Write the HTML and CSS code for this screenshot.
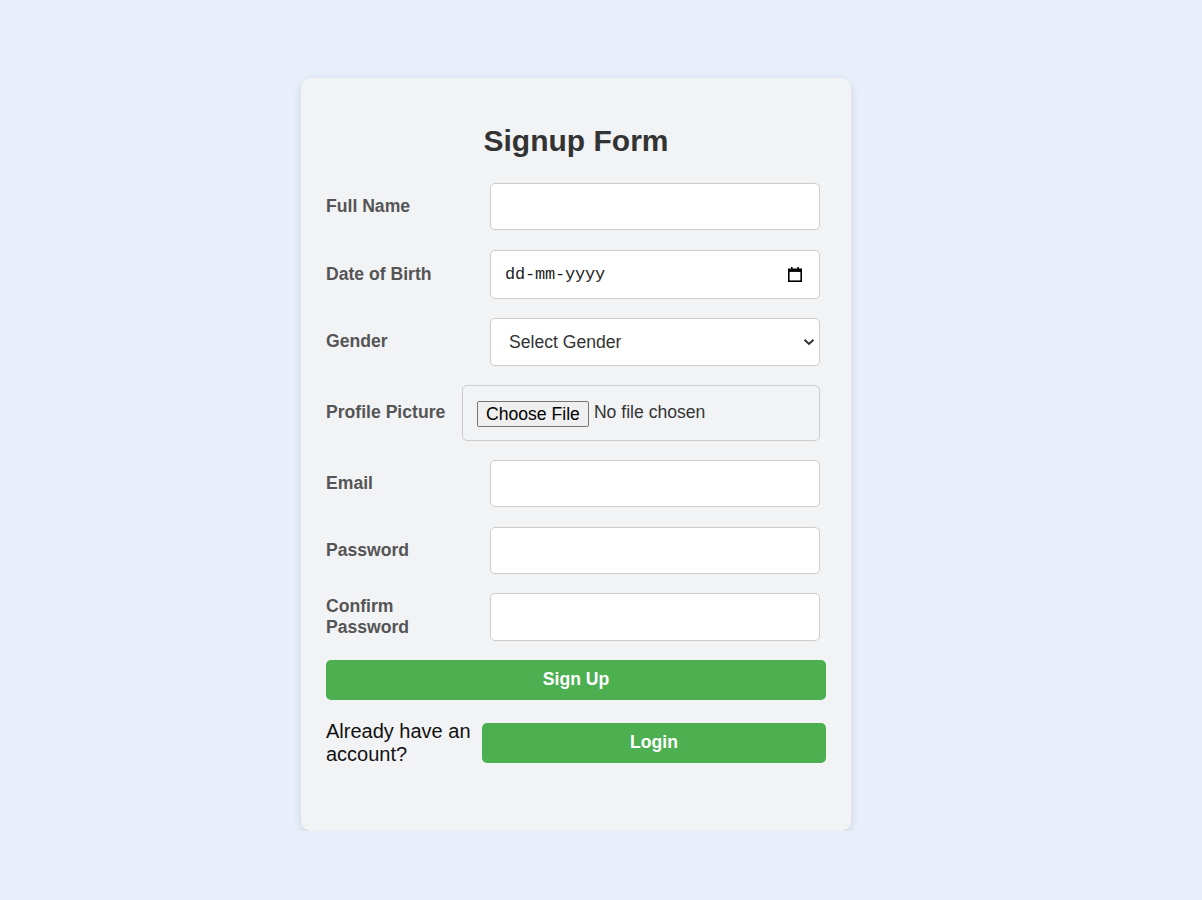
FILE: index.html
```html
<!DOCTYPE html>
<html lang="en">
<head>
<meta charset="utf-8">
<title>Signup Form</title>
<link rel="stylesheet" href="styles.css">
</head>
<body>
  <div class="card">
    <h2 class="title">Signup Form</h2>
    <form class="form">
      <div class="form-group">
        <label class="label" for="name">Full Name</label>
        <input class="field" id="name" type="text">
      </div>
      <div class="form-group">
        <label class="label" for="dob">Date of Birth</label>
        <div class="field date-field">
          <input class="date-input" id="dob" type="text" placeholder="dd-mm-yyyy">
          <svg class="cal-icon" width="14" height="15" viewBox="0 0 14 15" aria-hidden="true">
            <rect x="3" y="0" width="1.6" height="3" fill="#000"/>
            <rect x="9.4" y="0" width="1.6" height="3" fill="#000"/>
            <rect x="0.8" y="2.3" width="12.4" height="11.9" fill="none" stroke="#000" stroke-width="1.6"/>
            <rect x="0.8" y="2.3" width="12.4" height="2.6" fill="#000"/>
          </svg>
        </div>
      </div>
      <div class="form-group">
        <label class="label" for="gender">Gender</label>
        <div class="select-wrap">
          <select class="field select" id="gender">
            <option>Select Gender</option>
            <option>Male</option>
            <option>Female</option>
            <option>Other</option>
          </select>
          <svg class="chevron" width="12" height="8" viewBox="0 0 12 8" aria-hidden="true">
            <path d="M1.5 1.8 L6 6 L10.5 1.8" fill="none" stroke="#333" stroke-width="2"/>
          </svg>
        </div>
      </div>
      <div class="form-group">
        <label class="label" for="pic">Profile Picture</label>
        <input class="file" id="pic" type="file">
      </div>
      <div class="form-group">
        <label class="label" for="email">Email</label>
        <input class="field" id="email" type="email">
      </div>
      <div class="form-group">
        <label class="label" for="pw">Password</label>
        <input class="field" id="pw" type="password">
      </div>
      <div class="form-group">
        <label class="label" for="cpw">Confirm Password</label>
        <input class="field" id="cpw" type="password">
      </div>
      <button class="btn" type="button">Sign Up</button>
      <div class="login-row">
        <p class="login-text">Already have an account?</p>
        <button class="btn btn-login" type="button">Login</button>
      </div>
    </form>
  </div>
</body>
</html>
```

FILE: styles.css
```css
* {
  box-sizing: border-box;
}

body {
  margin: 0;
  padding-right: 50px;
  background: #e8effb;
  font-family: "Liberation Sans", Arial, sans-serif;
  display: flex;
  justify-content: center;
}

.card {
  width: 550px;
  margin-top: 77.5px;
  padding: 25px 25px 25px;
  background: #f2f3f5;
  border-radius: 10px;
  box-shadow: 0 3px 10px rgba(0, 0, 0, 0.12);
}

.title {
  margin: 21px 0 25px;
  font-size: 30px;
  line-height: 34.5px;
  font-weight: bold;
  color: #333;
  text-align: center;
}

.form {
  display: flex;
  flex-direction: column;
}

.form-group {
  display: flex;
  align-items: center;
  justify-content: space-between;
  margin-bottom: 19.3px;
}

.label {
  flex: 0 1 130px;
  min-width: 0;
  font-size: 17.6px;
  line-height: 21px;
  font-weight: bold;
  color: #555;
}

.field {
  flex: 0 0 330px;
  width: 330px;
  margin-right: 6px;
  height: 47.4px;
  padding: 0 12px;
  border: 1px solid #ccc;
  border-radius: 5px;
  background: #fff;
  font-family: "Liberation Sans", Arial, sans-serif;
  font-size: 17.6px;
  color: #333;
}

.date-field {
  height: 49px;
  display: flex;
  align-items: center;
  padding: 0 17px 0 14px;
}

.date-input {
  flex: 1;
  min-width: 0;
  border: 0;
  outline: 0;
  padding: 0;
  background: transparent;
  font-family: "Liberation Mono", "DejaVu Sans Mono", monospace;
  font-size: 17px;
  letter-spacing: -0.2px;
  color: #222;
}

.date-input::placeholder {
  color: #222;
  opacity: 1;
}

.cal-icon {
  flex: 0 0 auto;
  display: block;
}

.select-wrap {
  flex: 0 0 330px;
  margin-right: 6px;
  position: relative;
  display: flex;
}

.select {
  flex: 1 1 auto;
  width: 100%;
  margin-right: 0;
  height: 48px;
  padding: 0 30px 0 18px;
  appearance: none;
  -webkit-appearance: none;
}

.chevron {
  position: absolute;
  right: 5px;
  top: 20px;
  display: block;
  pointer-events: none;
}

.file {
  flex: 0 0 358px;
  width: 358px;
  min-width: 0;
  max-width: 358px;
  margin-right: 6px;
  padding: 13px 13px 13px 14px;
  border: 1px solid #ccc;
  border-radius: 5px;
  background: transparent;
  font-family: "Liberation Sans", Arial, sans-serif;
  font-size: 17.6px;
  line-height: 26px;
  color: #333;
}

.file::file-selector-button {
  font-family: "Liberation Sans", Arial, sans-serif;
  font-size: 17.6px;
  line-height: 20px;
  color: #000;
  height: 26px;
  padding: 2px 8px;
  margin-right: 5px;
  border: 1px solid #767676;
  border-radius: 2px;
  background: #efefef;
  vertical-align: middle;
}

.btn {
  display: block;
  width: 100%;
  height: 40px;
  padding: 0;
  border: 0;
  border-radius: 5px;
  background: #4caf50;
  color: #fff;
  font-family: "Liberation Sans", Arial, sans-serif;
  font-size: 17.6px;
  font-weight: bold;
}

.login-row {
  display: flex;
  align-items: center;
  gap: 6px;
  margin-top: 20px;
  margin-bottom: 40px;
}

.login-text {
  flex: 0 0 150px;
  margin: 0;
  font-size: 20px;
  line-height: 23px;
  color: #111;
}

.btn-login {
  flex: 1;
  width: auto;
}
```
